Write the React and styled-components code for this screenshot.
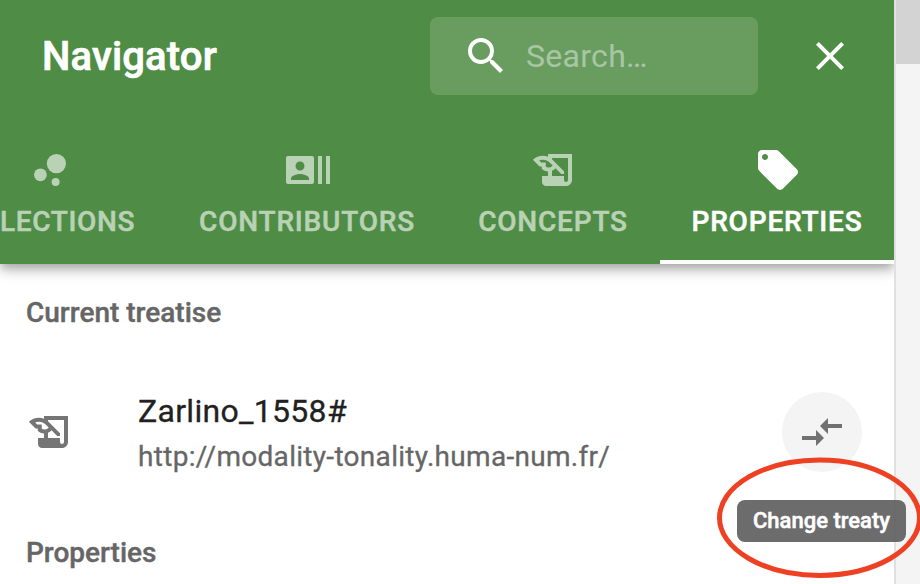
import React from "react";
import styled, { createGlobalStyle } from "styled-components";
import {
  MdBubbleChart,
  MdClose,
  MdCompareArrows,
  MdHistoryEdu,
  MdLocalOffer,
  MdRecentActors,
  MdSearch,
} from "react-icons/md";

const GlobalStyle = createGlobalStyle`
  * { box-sizing: border-box; }
  body {
    margin: 0;
    overflow: hidden;
    font-family: Roboto, "Liberation Sans", sans-serif;
  }
`;

const Screen = styled.div`
  position: relative;
  display: flex;
  width: 920px;
  height: 584px;
  overflow: hidden;
  background: #f4f4f4;
`;

const Drawer = styled.main`
  display: flex;
  flex-direction: column;
  width: 896px;
  height: 100%;
  overflow: hidden;
  background: #fff;
  border-right: 2px solid #e0e0e0;
`;

const Gutter = styled.div`
  flex: 1;
`;

const GutterHeader = styled.div`
  height: 64px;
  background: #d3d3d3;
`;

const AppBar = styled.header`
  flex: none;
  height: 264px;
  color: #fff;
  background: #4f8c45;
  box-shadow: 0 4px 8px -2px rgba(0, 0, 0, 0.2),
    0 8px 10px rgba(0, 0, 0, 0.14), 0 2px 20px rgba(0, 0, 0, 0.12);
`;

const Toolbar = styled.div`
  display: flex;
  align-items: center;
  height: 112px;
  padding: 0 40px 0 42px;
`;

const Title = styled.h1`
  flex: 1;
  margin: 0;
  padding-top: 2px;
  font-size: 40px;
  font-weight: 500;
  line-height: 64px;
  letter-spacing: 0.15px;
  -webkit-text-stroke: 0.7px currentColor;
`;

const SearchBox = styled.label`
  display: flex;
  align-items: center;
  width: 328px;
  height: 78px;
  margin-right: 48px;
  padding-left: 32px;
  border-radius: 8px;
  background: rgba(255, 255, 255, 0.15);
`;

const SearchInput = styled.input`
  width: 200px;
  margin-left: 16px;
  padding: 0;
  border: 0;
  outline: 0;
  background: none;
  color: inherit;
  font: 400 32px Roboto, "Liberation Sans", sans-serif;
  letter-spacing: 0.3px;

  &::placeholder {
    color: #fff;
    opacity: 0.42;
  }
`;

const IconButton = styled.button`
  display: flex;
  padding: 0;
  border: 0;
  background: none;
  color: inherit;
`;

const Tabs = styled.nav`
  display: flex;
  height: 152px;
`;

const Tab = styled.div`
  display: flex;
  flex: none;
  flex-direction: column;
  align-items: ${(p) => (p.$leading ? "flex-start" : "center")};
  width: ${(p) => p.$width}px;
  padding-top: 34px;
  border-bottom: 4px solid ${(p) => (p.$active ? "#fff" : "transparent")};
  color: ${(p) => (p.$active ? "#fff" : "#b9d1b5")};
  font-size: 28px;
  font-weight: 500;
  line-height: 35px;
  letter-spacing: ${(p) => (p.$leading ? "0.65px" : "0.8px")};
  white-space: nowrap;
  -webkit-text-stroke: 0.5px currentColor;

  & > svg {
    margin-left: ${(p) => (p.$leading ? "26px" : "2px")};
    stroke-width: 0;
  }
`;

const TabLabel = styled.span`
  margin-top: 10px;
`;

const Subheader = styled.h2`
  flex: none;
  height: 96px;
  margin: 0;
  padding: 1px 0 0 26px;
  color: #666;
  font-size: 28px;
  font-weight: 500;
  line-height: 96px;
  -webkit-text-stroke: 0.4px currentColor;
`;

const ListItem = styled.div`
  display: flex;
  flex: none;
  align-items: center;
  height: 144px;
  padding: 0 32px 0 26px;
`;

const ItemIcon = styled.div`
  display: flex;
  width: 112px;
  color: #757575;
`;

const ItemText = styled.div`
  flex: 1;
`;

const Primary = styled.div`
  color: #212121;
  font-size: 32px;
  line-height: 48px;
  letter-spacing: 0.3px;
  -webkit-text-stroke: 0.3px currentColor;
`;

const Secondary = styled.div`
  margin-top: 2px;
  color: #666;
  font-size: 28px;
  line-height: 40px;
  letter-spacing: 0.3px;
  -webkit-text-stroke: 0.3px currentColor;
`;

const RoundButton = styled(IconButton)`
  align-items: center;
  justify-content: center;
  width: 80px;
  height: 80px;
  border-radius: 50%;
  background: #f4f4f4;
  color: #717171;
`;

const Tooltip = styled.div`
  position: absolute;
  left: 737px;
  top: 500px;
  width: 169px;
  height: 42px;
  border-radius: 8px;
  background: rgba(97, 97, 97, 0.93);
  color: #fff;
  font-size: 22px;
  font-weight: 500;
  line-height: 42px;
  text-align: center;
  white-space: nowrap;
  -webkit-text-stroke: 0.5px currentColor;
`;

const Highlight = styled.svg`
  position: absolute;
  left: 710px;
  top: 450px;
  width: 210px;
  height: 134px;
`;

const tabs = [
  { label: "LECTIONS", width: 168, Icon: MdBubbleChart, leading: true },
  { label: "CONTRIBUTORS", width: 278, Icon: MdRecentActors },
  { label: "CONCEPTS", width: 214, Icon: MdHistoryEdu },
  { label: "PROPERTIES", width: 234, Icon: MdLocalOffer, active: true },
];

export default function App() {
  return (
    <Screen>
      <GlobalStyle />
      <Drawer>
        <AppBar>
          <Toolbar>
            <Title>Navigator</Title>
            <SearchBox>
              <MdSearch size={48} />
              <SearchInput placeholder="Search…" aria-label="Search" />
            </SearchBox>
            <IconButton aria-label="Close">
              <MdClose size={48} />
            </IconButton>
          </Toolbar>
          <Tabs>
            {tabs.map(({ label, width, Icon, active, leading }) => (
              <Tab key={label} $width={width} $active={active} $leading={leading}>
                <Icon size={48} />
                <TabLabel>{label}</TabLabel>
              </Tab>
            ))}
          </Tabs>
        </AppBar>
        <Subheader>Current treatise</Subheader>
        <ListItem>
          <ItemIcon>
            <MdHistoryEdu size={48} />
          </ItemIcon>
          <ItemText>
            <Primary>Zarlino_1558#</Primary>
            <Secondary>http://modality-tonality.huma-num.fr/</Secondary>
          </ItemText>
          <RoundButton aria-label="Change treaty">
            <MdCompareArrows size={48} />
          </RoundButton>
        </ListItem>
        <Subheader>Properties</Subheader>
      </Drawer>
      <Gutter>
        <GutterHeader />
      </Gutter>
      <Highlight viewBox="0 0 210 134" fill="none">
        <ellipse cx="109.5" cy="67.7" rx="100" ry="57.7" stroke="#ee4023" strokeWidth="5" />
      </Highlight>
      <Tooltip>Change treaty</Tooltip>
    </Screen>
  );
}
